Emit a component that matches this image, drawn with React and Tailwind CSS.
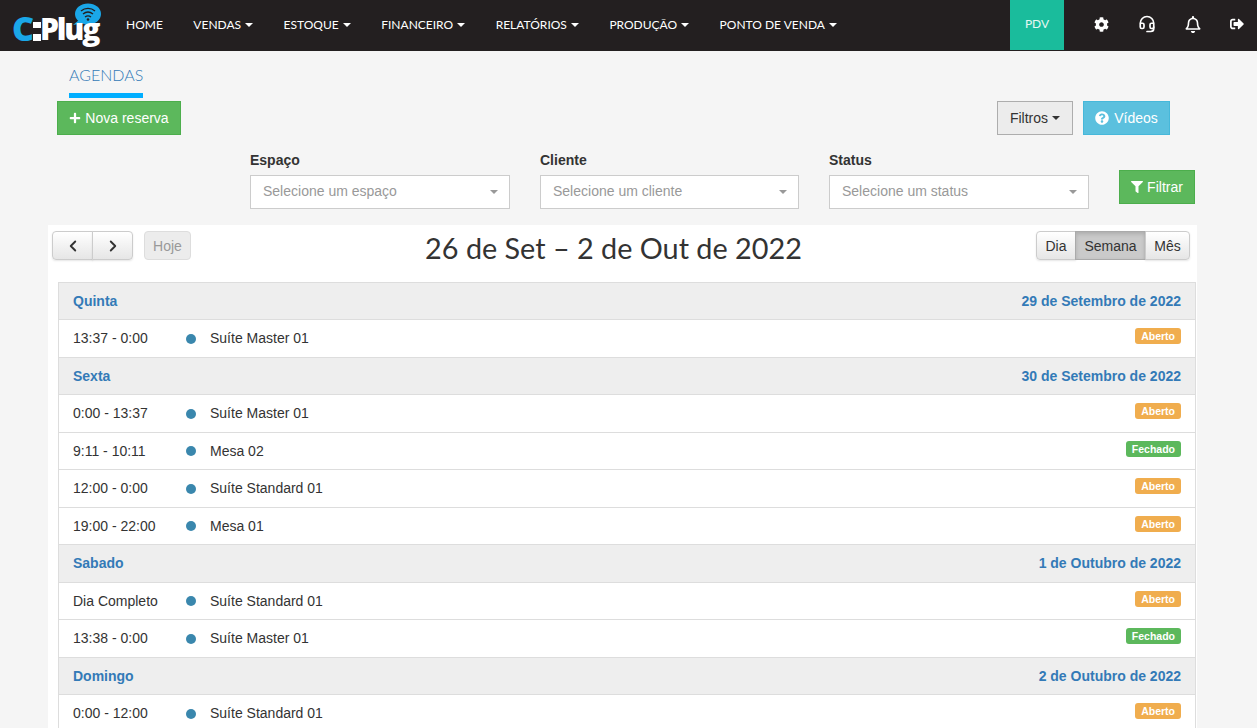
import React from 'react';
import { ChevronLeft, ChevronRight, Headset } from 'lucide-react';
import { FaCog, FaRegBell, FaPlus, FaFilter, FaQuestionCircle, FaSignOutAlt } from 'react-icons/fa';

const Caret = ({ className = 'border-t-white' }) => (
  <span className={`ml-1 inline-block h-0 w-0 border-x-4 border-t-4 border-x-transparent align-middle ${className}`} />
);

const navItems = ['VENDAS', 'ESTOQUE', 'FINANCEIRO', 'RELATÓRIOS', 'PRODUÇÃO', 'PONTO DE VENDA'];

const Logo = () => (
  <div className="relative h-[50px] w-[90px] shrink-0 font-['Open_Sans',sans-serif] font-extrabold">
    {/* wifi bubble and plug prongs */}
    <svg width="90" height="50" viewBox="0 0 90 50" className="absolute left-0 top-0">
      <ellipse cx="76" cy="13" rx="13" ry="10.5" fill="#1aa7e8" />
      <path d="M67 19l-6 5 11-2z" fill="#1aa7e8" />
      <path d="M69 10c4-3.5 10-3.5 14 0M71 13c3-2.5 7-2.5 10 0M73 16c2-1.5 4-1.5 6 0" stroke="#231f20" strokeWidth="1.4" fill="none" />
      <circle cx="76" cy="18.5" r="1.3" fill="#231f20" />
      <rect x="21" y="21" width="8" height="6" fill="#fff" />
      <rect x="21" y="33" width="8" height="7" fill="#fff" />
    </svg>
    <span className="absolute left-[0px] top-[7px] text-[34px] leading-[40px] text-[#1aa7e8]">C</span>
    <span className="absolute left-[28px] top-[10px] text-[30px] leading-[36px] tracking-[-2.2px] text-white">Plug</span>
  </div>
);

const Header = () => (
  <header className="flex h-[51px] items-center bg-[#231f20] pl-[12px] font-['Lato',sans-serif] text-[12px] text-white">
    <Logo />
    <nav className="ml-[24px] flex items-center gap-[30.5px] pb-[2px]">
      <a>HOME</a>
      {navItems.map((n) => (
        <a key={n} className="whitespace-nowrap">{n}<Caret /></a>
      ))}
    </nav>
    <div className="ml-auto flex h-full items-start">
      <div className="flex h-[50px] w-[54px] items-center justify-center bg-[#1abc9c] pb-[2px] text-[#e8f8f4]">PDV</div>
      <div className="ml-[30px] flex h-[50px] items-center gap-[29px] pb-[2px] pr-[13px]">
        <FaCog className="h-[15px] w-[15px]" />
        <Headset size={18} strokeWidth={2.25} />
        <FaRegBell className="h-[17px] w-[16px]" />
        <FaSignOutAlt className="h-[14px] w-[14px]" />
      </div>
    </div>
  </header>
);

const Select = ({ label, placeholder, width }) => (
  <div className={width}>
    <div className="mb-[6px] h-[17px] text-[14px] font-bold leading-[17px] text-[#333]">{label}</div>
    <div className="flex h-[34px] items-center justify-between border border-[#ccc] bg-white pb-px pl-3 pr-[11px] text-[14px] text-[#999]">
      <span>{placeholder}</span>
      <Caret className="border-t-[#999]" />
    </div>
  </div>
);

const days = [
  { name: 'Quinta', date: '29 de Setembro de 2022', rows: [['13:37 - 0:00', 'Suíte Master 01', 'Aberto']] },
  {
    name: 'Sexta',
    date: '30 de Setembro de 2022',
    rows: [
      ['0:00 - 13:37', 'Suíte Master 01', 'Aberto'],
      ['9:11 - 10:11', 'Mesa 02', 'Fechado'],
      ['12:00 - 0:00', 'Suíte Standard 01', 'Aberto'],
      ['19:00 - 22:00', 'Mesa 01', 'Aberto'],
    ],
  },
  {
    name: 'Sabado',
    date: '1 de Outubro de 2022',
    rows: [
      ['Dia Completo', 'Suíte Standard 01', 'Aberto'],
      ['13:38 - 0:00', 'Suíte Master 01', 'Fechado'],
    ],
  },
  { name: 'Domingo', date: '2 de Outubro de 2022', rows: [['0:00 - 12:00', 'Suíte Standard 01', 'Aberto']] },
];

const Badge = ({ status }) => (
  <span className={`mb-[5px] rounded-[3px] px-[6px] py-[2px] text-[10.5px] font-bold leading-[12px] text-white ${status === 'Aberto' ? 'bg-[#f0ad4e]' : 'bg-[#5cb85c]'}`}>
    {status}
  </span>
);

const Agenda = () => (
  <div className="ml-[10px] mr-[1px] border border-[#ddd]">
    {days.map((d, n) => (
      <div key={d.name}>
        <div className={`flex items-center justify-between border-b border-[#ddd] bg-[#eee] px-[14px] text-[14px] font-bold text-[#337ab7] ${n === 0 ? 'h-[37.3px]' : 'h-[37.5px]'}`}>
          <span>{d.name}</span>
          <span>{d.date}</span>
        </div>
        {d.rows.map((r, i) => (
          <div key={i} className="flex h-[37.5px] items-center justify-between border-b border-[#ddd] bg-white px-[14px] text-[14px] text-[#333]">
            <div className="flex items-center">
              <span className="w-[113px]">{r[0]}</span>
              <span className="h-[10px] w-[10px] rounded-full bg-[#3a87ad]" />
              <span className="ml-[14px]">{r[1]}</span>
            </div>
            <Badge status={r[2]} />
          </div>
        ))}
      </div>
    ))}
  </div>
);

const Btn = ({ className, children }) => (
  <button className={`flex h-[29px] items-center justify-center border border-[#ccc] bg-gradient-to-b from-white to-[#e6e6e6] text-[14px] text-[#333] shadow-[0_1px_2px_rgba(0,0,0,0.1)] ${className}`}>
    {children}
  </button>
);

export default function App() {
  return (
    <div className="h-[728px] overflow-hidden bg-[#f5f5f5] font-['Liberation_Sans',Arial,sans-serif]">
      <Header />
      <div className="px-[48px]">
        <div className="ml-[21px] w-[74px] border-b-[5px] border-[#00aeff] pb-[9px] pt-[14px] font-['Lato',sans-serif] text-[16px] font-light leading-[19px] text-[#337ab7]">AGENDAS</div>
        <div className="mt-[3px] flex items-start justify-between pl-[9px] pr-[39px]">
          <button className="flex h-[34px] w-[124px] items-center justify-center gap-[4px] border border-[#4cae4c] bg-[#5cb85c] text-[14px] text-white">
            <FaPlus className="h-[12px] w-[12px]" /> Nova reserva
          </button>
          <div className="flex gap-[10px]">
            <button className="flex h-[34px] w-[76px] items-center justify-center border border-[#adadad] bg-[#ececec] text-[14px] text-[#333]">Filtros <Caret className="border-t-[#333]" /></button>
            <button className="flex h-[34px] w-[87px] items-center justify-center gap-[5px] border border-[#46b8da] bg-[#5bc0de] text-[14px] text-white">
              <FaQuestionCircle className="h-[14px] w-[14px]" /> Vídeos
            </button>
          </div>
        </div>
        <div className="mt-[17px] flex items-end pl-[202px]">
          <Select label="Espaço" placeholder="Selecione um espaço" width="w-[260px]" />
          <div className="w-[30px]" />
          <Select label="Cliente" placeholder="Selecione um cliente" width="w-[259px]" />
          <div className="w-[30px]" />
          <Select label="Status" placeholder="Selecione um status" width="w-[260px]" />
          <button className="mb-[5px] ml-[30px] flex h-[34px] w-[76px] items-center justify-center gap-[4px] border border-[#4cae4c] bg-[#5cb85c] text-[14px] text-white">
            <FaFilter className="h-[12px] w-[12px]" /> Filtrar
          </button>
        </div>
        <div className="mt-[16px] w-[1149px] bg-white pb-[30px]">
          <div className="flex h-[57px] items-start justify-between pl-[4px] pr-[7px] pt-[6px]">
            <div className="flex w-[139px] items-center">
              <Btn className="w-[41px] rounded-l-[4px]"><ChevronLeft size={18} strokeWidth={2.5} /></Btn>
              <Btn className="-ml-px w-[41px] rounded-r-[4px]"><ChevronRight size={18} strokeWidth={2.5} /></Btn>
              <button className="ml-[11px] flex h-[29px] w-[47px] items-center justify-center rounded-[4px] border border-[#ddd] bg-[#ececec] pt-px text-[14px] text-[#999]">Hoje</button>
            </div>
            <h2 className="whitespace-nowrap font-['Lato',sans-serif] text-[28.8px] leading-[34px] text-[#333]">26 de Set – 2 de Out de 2022</h2>
            <div className="flex">
              <Btn className="w-[40px] rounded-l-[4px] pt-px">Dia</Btn>
              <button className="-ml-px flex h-[29px] w-[71px] items-center justify-center border border-[#aaa] bg-[#cacaca] pt-px text-[14px] text-[#333] shadow-[inset_0_2px_4px_rgba(0,0,0,0.15)]">Semana</button>
              <Btn className="-ml-px w-[45px] rounded-r-[4px] pt-px">Mês</Btn>
            </div>
          </div>
          <Agenda />
        </div>
      </div>
    </div>
  );
}
